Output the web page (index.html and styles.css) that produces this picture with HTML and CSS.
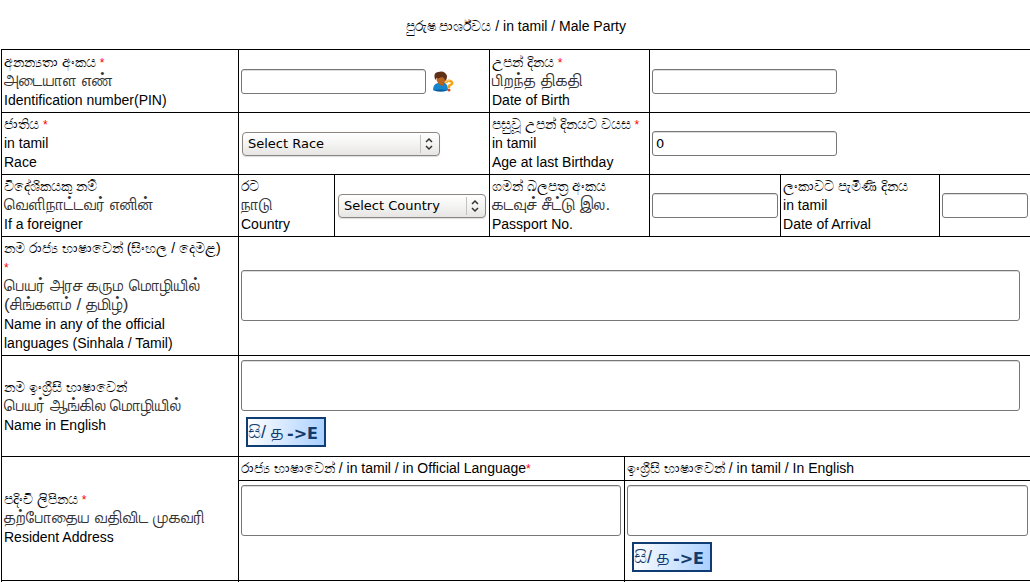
FILE: index.html
```html
<!DOCTYPE html>
<html lang="si">
<head>
<meta charset="utf-8">
<meta name="viewport" content="width=device-width, initial-scale=1">
<title>Male Party</title>
<link rel="stylesheet" href="styles.css">
</head>
<body>
<form class="form">
<table class="grid">
  <caption class="title"><span class="si">පුරුෂ පාර්ශ්වය</span> / in tamil / Male Party</caption>
  <colgroup>
    <col class="c-label"><col class="c-country"><col class="c-select"><col class="c-mid"><col class="c-gap"><col class="c-passport"><col class="c-arrival"><col class="c-end">
  </colgroup>
  <tbody>
  <tr class="first">
    <td><label for="pin"><span class="si">අනන්‍යතා අංකය</span> <span class="req">*</span><br><span class="ta">அடையாள எண்</span><br>Identification number(PIN)</label></td>
    <td colspan="2"><div class="inline">
      <input class="field" id="pin" type="text">
      <button class="lookup" type="button" aria-label="Look up person">
        <svg viewBox="0 0 22 22" width="22" height="22">
          <path d="M1 19 Q1 13 6 12 L13 12 Q16 14 16 19 Q9 22 1 19Z" fill="#1686cc"/>
          <path d="M1 19 Q9 18 16 19 Q9 22 1 19Z" fill="#0b5a9b"/>
          <path d="M6 12 L13 11 L11 15 L8 14Z" fill="#b85f16"/>
          <ellipse cx="9" cy="8" rx="4.500" ry="5" fill="#b96420"/>
          <path d="M3 8 Q1 2 6 1 Q13 -1 15 5 Q15 9 13 10 Q13 7 10 6 Q6 8 4 7 L4 9Z" fill="#603016"/>
          <path d="M14 12 Q15 9 18 10 Q21 11 20 13 L17 15 L17 17" fill="none" stroke="#f2a51d" stroke-width="2.500"/>
          <path d="M14 11 Q15 9 18 9" fill="none" stroke="#ffd36a" stroke-width="1"/>
          <circle cx="17" cy="19" r="1.500" fill="#c94b18"/>
        </svg>
      </button>
    </div></td>
    <td colspan="2"><label for="dob"><span class="si">උපන් දිනය</span> <span class="req">*</span><br><span class="ta">பிறந்த திகதி</span><br>Date of Birth</label></td>
    <td colspan="3"><input class="field" id="dob" type="text"></td>
  </tr>
  <tr>
    <td><label for="race"><span class="si">ජාතිය</span> <span class="req">*</span><br>in tamil<br>Race</label></td>
    <td colspan="2"><div class="picker picker-race"><select id="race"><option>Select Race</option></select><svg class="arrows" viewBox="0 0 20 24" width="20" height="24"><path class="divider" d="M1.500 3V21"/><path d="M7 10L10 7L13 10M7 14L10 17L13 14"/></svg></div></td>
    <td colspan="2"><label for="age"><span class="si">පසුවූ උපන් දිනයට වයස</span> <span class="req">*</span><br>in tamil<br>Age at last Birthday</label></td>
    <td colspan="3"><input class="field" id="age" type="text" value="0"></td>
  </tr>
  <tr>
    <td><span class="si">විදේශිකයකු නම්</span><br><span class="ta">வெளிநாட்டவர் எனின்</span><br>If a foreigner</td>
    <td><label for="country"><span class="si">රට</span><br><span class="ta">நாடு</span><br>Country</label></td>
    <td><div class="picker"><select id="country"><option>Select Country</option></select><svg class="arrows" viewBox="0 0 20 24" width="20" height="24"><path class="divider" d="M1.500 3V21"/><path d="M7 10L10 7L13 10M7 14L10 17L13 14"/></svg></div></td>
    <td colspan="2"><label for="passport"><span class="si">ගමන් බලපත්‍ර අංකය</span><br><span class="ta">கடவுச் சீட்டு இல.</span><br>Passport No.</label></td>
    <td><input class="field fill" id="passport" type="text"></td>
    <td><label for="arrival"><span class="si">ලංකාවට පැමිණි දිනය</span><br>in tamil<br>Date of Arrival</label></td>
    <td><input class="field fill" id="arrival" type="text"></td>
  </tr>
  <tr>
    <td><label for="official"><span class="si">නම රාජ්‍ය භාෂාවෙන් (සිංහල / දෙමළ)</span><br><span class="req">*</span><br><span class="ta">பெயர் அரச கரும மொழியில்<br>(சிங்களம் / தமிழ்)</span><br>Name in any of the official<br>languages (Sinhala / Tamil)</label></td>
    <td class="wide" colspan="7"><textarea class="field area" id="official"></textarea></td>
  </tr>
  <tr>
    <td><label for="english"><span class="si">නම ඉංග්‍රීසි භාෂාවෙන්</span><br><span class="ta">பெயர் ஆங்கில மொழியில்</span><br>Name in English</label></td>
    <td class="wide" colspan="7"><textarea class="field area" id="english"></textarea>
      <button class="translit" type="button"><span class="thin">සි/ த</span><b>-&gt;E</b></button></td>
  </tr>
  <tr>
    <td rowspan="2"><span class="si">පදිංචි ලිපිනය</span> <span class="req">*</span><br><span class="ta">தற்போதைய வதிவிட முகவரி</span><br>Resident Address</td>
    <td colspan="3"><label for="addr-official"><span class="si">රාජ්‍ය භාෂාවෙන්</span> / in tamil / in Official Language<span class="req">*</span></label></td>
    <td colspan="4"><label for="addr-english"><span class="si">ඉංග්‍රීසි භාෂාවෙන්</span> / in tamil / In English</label></td>
  </tr>
  <tr>
    <td class="top" colspan="3"><textarea class="field area" id="addr-official"></textarea></td>
    <td class="top" colspan="4"><textarea class="field area" id="addr-english"></textarea>
      <button class="translit" type="button"><span class="thin">සි/ த</span><b>-&gt;E</b></button></td>
  </tr>
  <tr class="rest"><td></td><td colspan="3"></td><td colspan="4"></td></tr>
  </tbody>
</table>
</form>
</body>
</html>
```
FILE: styles.css
```css
* { box-sizing: border-box; }

body {
  margin: 0;
  background: #fff;
  color: #000;
  font: 14px/19px "Liberation Sans", Arial, sans-serif;
}

.form { padding-left: 1px; }

.grid {
  width: 100%;
  table-layout: fixed;
  border-collapse: collapse;
}

.title { padding: 17px 0 13px; }

.c-label { width: 237px; }
.c-country { width: 96px; }
.c-select { width: 155px; }
.c-mid { width: 135px; }
.c-gap { width: 25px; }
.c-passport { width: 131px; }
.c-arrival { width: 159px; }
.c-end { width: 91px; }

td {
  padding: 2px;
  border: 1px solid #000;
  vertical-align: middle;
}
td:last-child { border-right: 0; padding-right: 3px; }
.first td { padding-top: 3px; }
td.top { vertical-align: top; padding: 4px 3px 8px 2px; }
td.wide { padding: 4px 11px 9px 2px; }
#official { margin-top: 4px; }
.rest td { height: 1px; padding: 0; border-bottom: 0; }

label { display: block; }
.si { font-size: 14px; line-height: 16px; }
.ta { font-size: 17px; line-height: 16px; color: #333; }
.req { color: #f00; font-size: 12px; line-height: 16px; }

.inline { display: flex; align-items: center; gap: 6px; }

.field {
  display: block;
  width: 185px;
  height: 25px;
  padding: 0 3px;
  border: 1px solid #777;
  border-radius: 3px;
  background: #fff;
  box-shadow: inset 0 1px #ddd;
  font: 13px "DejaVu Sans", sans-serif;
}
.field.fill { width: 100%; }
.field.area { width: 100%; height: 51px; resize: none; }

.lookup {
  display: block;
  width: 22px;
  height: 22px;
  padding: 0;
  border: 0;
  background: none;
}
.lookup svg { display: block; }

.picker { position: relative; margin: 0 1px; }
.picker-race { width: 198px; }
.picker select {
  display: block;
  appearance: none;
  width: 100%;
  height: 24px;
  padding: 0 22px 0 5px;
  border: 1px solid #8b8681;
  border-radius: 4px;
  background: linear-gradient(#fff, #f4f4f3 50%, #e6e5e3);
  box-shadow: 0 1px 1px #ddd;
  color: #000;
  font: 13px "DejaVu Sans", sans-serif;
}
.arrows {
  position: absolute;
  top: 0;
  right: 1px;
  fill: none;
  stroke: #333;
  stroke-width: 1.5;
  pointer-events: none;
}
.arrows .divider { stroke: #c4c2c0; stroke-width: 1; }

.translit {
  display: flex;
  align-items: center;
  gap: 3px;
  width: 80px;
  height: 30px;
  margin: 6px 0 0 5px;
  padding: 0;
  border: 2px solid #0e3c73;
  background: linear-gradient(100deg, #fff, #a9cfff);
  color: #123a6b;
  font: 17px/26px "DejaVu Sans", sans-serif;
  white-space: nowrap;
}
.translit .thin { font-family: "Liberation Sans", sans-serif; font-size: 18px; }
.translit b { padding-top: 3px; font-size: 16px; }
```
